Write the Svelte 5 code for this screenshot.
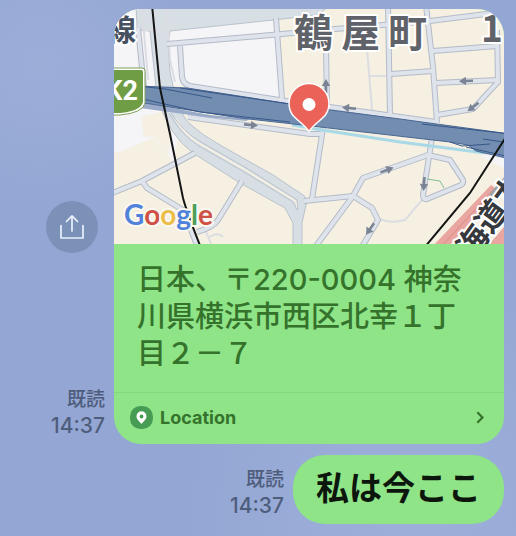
<script lang="ts">
	type Arrow = { x: number; y: number; angle: number };

	const address = '日本、〒220-0004 神奈川県横浜市西区北幸１丁目２－７';

	const roads = [
		'M167 44L293 33L335 29L430 21L510 11',
		'M276 18L282 99',
		'M180 46L182 77Q183 84 190 86L286 101L330 107L436 122',
		'M326 48L327 106',
		'M388 5L390 116',
		'M426 5L433 67L437 123',
		'M391 74L433 71',
		'M433 51L497 46',
		'M435 83L498 80',
		'M497 30L498 82L473 109L437 115',
		'M138 28L144 88',
		'M188 117L310 134L323 134',
		'M323 128L312 199',
		'M304 201L353 196L372 208L378 220L360 250',
		'M353 196L313 250',
		'M353 196L363 178L428 155L450 160L463 180Q464 183 461 185L427 199Q423 200 423 195L432 138',
		'M110 194L142 181L195 153',
		'M142 181L147 188L183 210L199 250',
		'M242 181L218 220Q214 227 197 232'
	];

	const lanes = [
		'M367 48L372 110M368 76L388 76',
		'M380 219Q391 224 405 220L422 200',
		'M205 229L211 244M208 238Q218 231 223 237',
		'M143 9L144 32L148 80M167 9L170 60L175 82M166 30L143 30'
	];

	const arrows: Arrow[] = [
		{ x: 251, y: 125, angle: 5 },
		{ x: 349, y: 108, angle: 186 },
		{ x: 326, y: 86, angle: -90 },
		{ x: 466, y: 81, angle: 178 },
		{ x: 473, y: 107, angle: 142 },
		{ x: 387, y: 170, angle: -20 },
		{ x: 424, y: 184, angle: 94 },
		{ x: 370, y: 229, angle: 125 }
	];
</script>

{#snippet receipt()}
	<div class="receipt">
		<span class="read">既読</span>
		<time datetime="14:37">14:37</time>
	</div>
{/snippet}

<main class="chat">
	<section class="message">
		<div class="side">
			<button class="share" type="button" aria-label="Share">
				<svg width="24" height="26" viewBox="0 0 24 26" aria-hidden="true">
					<path d="M1 11.5V24H23V11.5M12 17V2M6.5 7.5L12 1.8L17.5 7.5" />
				</svg>
			</button>
			{@render receipt()}
		</div>

		<article class="card">
			<svg class="map" viewBox="114 9 390 235" role="img" aria-label="Map">
				<rect x="114" y="9" width="390" height="235" fill="#f5f0e1" />
				<!-- blocks -->
				<path
					fill="#f5f4f7"
					d="M114 9H160V122H180L174 162L153 138L134 146L118 153L114 150Z"
				/>
				<path fill="#f5f0e1" d="M141 117L162 112L172 134L168 154L152 136L144 137Z" />
				<path fill="#f5f4f7" d="M166 30L275 20L281 99L166 84ZM480 156L504 150V168Z" />

				<!-- trunk road -->
				<path
					class="trunk"
					d="M136 5H330L318 15L273 20L170 31L168 44L170 72L175 95L182 113Q186 121 190 124Q202 135 220 145L273 175L303 195Q308 198 306 205L302 223V248H293V223L285 208L240 183L193 153Q180 143 173 132Q166 121 163 113L156 87L150 31L137 30Z"
				/>
				<path fill="none" stroke="#f5f0e1" stroke-width="2" d="M175 118Q185 135 200 144L247 171L294 200Q298 203 297 208" />
				<path
					fill="none"
					stroke="#b9c2cc"
					d="M171 113Q184 133 201 142L248 169L297 200L298 210M169 113Q181 135 199 146L246 173L293 202L297 210"
				/>

				{#each lanes as d}
					<path class="lane" {d} />
				{/each}
				{#each roads as d}
					<path class="casing" {d} />
				{/each}
				{#each roads as d}
					<path class="road" {d} />
				{/each}

				<path fill="none" stroke="#a9d9e6" stroke-width="3" d="M292 125L322 130L400 142L485 153" />
				<path fill="none" stroke="#7fbf93" d="M427 179L440 181L444 188" />

				<!-- motorway -->
				<path fill="#9aabc9" d="M140 102L210 115L250 119L246 121L205 117L140 108Z" />
				<path
					fill="#728db0"
					stroke="#4a6793"
					d="M138 86L187 88L290 104L330 110L400 119L510 134V159L476 151L468 145L450 142L320 127L240 118L138 102Z"
				/>
				<path
					fill="none"
					stroke="#38588a"
					d="M138 86L165 89L212 98M180 88L290 104M138 98L200 112L290 122M422 124L510 134M450 142L462 146L490 144M466 147L510 157M483 139L510 143"
				/>

				{#each arrows as a}
					<g transform="translate({a.x} {a.y}) rotate({a.angle})">
						<path fill="#7b8494" d="M-7 -1.3H0V-4.2L7 0L0 4.2V1.3H-7Z" />
					</g>
				{/each}

				<!-- railways -->
				<path class="rail" d="M152 5L156 47L160 88L170 134L183 198Q186 210 201 248" />
				<path class="rail" d="M506 137L470 193L424 248" />
				<path fill="#e9a5a0" d="M431 248L491 185L499 191L447 248ZM486 248L504 227V248Z" />
				<path fill="none" stroke="#dc8983" d="M440 248L495 188" />
				<path fill="none" stroke="#a5a3a2" stroke-width="4" d="M490 196L506 178" />

				<!-- place names -->
				<text class="label line" x="106" y="41" font-size="30">線</text>
				<text class="label" x="294 341 388" y="47" font-size="39">鶴屋町</text>
				<text class="label number" x="481" y="42" font-size="37">1</text>
				<text class="label line dark" transform="translate(473 260) rotate(-54)" font-size="31">海道本</text>

				<path fill="#fff" stroke="#7a9f55" d="M100 68H142Q145 68 145 71V103Q143 113 120 115H100Z" />
				<path fill="#6f9d45" d="M100 70H141Q143 70 143 72V102Q141 111 120 113H100Z" />
				<text class="shield" x="138" y="100" text-anchor="end">K2</text>

				<!-- pin -->
				<path
					fill="#ea6258"
					stroke="#fff"
					stroke-width="1.5"
					d="M309 131.500C305 125 298 121 293 115.500A20 20 0 1 1 325 115.500C320 121 313 125 309 131.500Z"
				/>
				<circle cx="309" cy="104.500" r="6.500" fill="#fff" />

				<text class="google" x="124" y="225">
					<tspan fill="#5082dc">G</tspan><tspan fill="#cf5146">o</tspan><tspan fill="#ecbd49">o</tspan
					><tspan fill="#5082dc">g</tspan><tspan fill="#4c9f58">l</tspan><tspan fill="#cf5146">e</tspan>
				</text>
			</svg>

			<p class="address">{address}</p>

			<a class="location" href="#location">
				<svg width="23" height="23" viewBox="0 0 23 23" aria-hidden="true">
					<rect width="23" height="23" rx="10.500" fill="#479c54" />
					<path
						fill="#fff"
						fill-rule="evenodd"
						d="M11.500 18C9.500 15.500 6.500 13.500 6.500 10.300A5 5 0 0 1 16.500 10.300C16.500 13.500 13.500 15.500 11.500 18ZM11.500 8.600A1.900 1.900 0 1 0 11.500 12.400A1.900 1.900 0 1 0 11.500 8.600Z"
					/>
				</svg>
				<span>Location</span>
				<svg class="chevron" width="8" height="13" viewBox="0 0 8 13" aria-hidden="true">
					<path d="M1.300 1.300L6.500 6.500L1.300 11.700" />
				</svg>
			</a>
		</article>
	</section>

	<section class="message">
		<div class="side text-side">
			{@render receipt()}
		</div>
		<p class="bubble">私は今ここ</p>
	</section>
</main>

<style>
	:global(body) {
		margin: 0;
	}

	.chat {
		box-sizing: border-box;
		display: flex;
		flex-direction: column;
		gap: 11px;
		min-height: 100vh;
		padding: 9px 12px 12px 0;
		background:
			radial-gradient(ellipse at 8% 12%, rgb(164 181 220 / 0.5), transparent 22%),
			radial-gradient(ellipse at 80% 100%, rgb(164 181 220 / 0.6), transparent 40%),
			#94a7d4;
		font-family: Inter, 'Noto Sans CJK JP', sans-serif;
	}

	.message {
		display: flex;
		justify-content: flex-end;
	}

	.side {
		display: grid;
		grid-template-rows: 1fr auto 1fr;
		flex: 0 0 114px;
		justify-items: end;
	}

	.text-side {
		display: flex;
		flex: none;
		align-items: flex-end;
	}

	.share {
		display: grid;
		grid-row: 2;
		place-items: center;
		width: 52px;
		height: 52px;
		margin-right: 16px;
		padding: 0;
		border: 0;
		border-radius: 50%;
		background: #7c91b8;
	}

	.share path {
		fill: none;
		stroke: #e9f0fb;
		stroke-width: 1.7;
		stroke-linejoin: round;
		stroke-linecap: round;
	}

	.receipt {
		display: flex;
		grid-row: 3;
		flex-direction: column;
		align-self: end;
		align-items: flex-end;
		margin: 0 9px 5px 0;
		color: #4f5d7c;
		font-size: 21px;
		font-weight: 500;
		line-height: 26px;
	}

	.read {
		font-size: 19px;
	}

	.card {
		flex: 1;
		min-width: 0;
		overflow: hidden;
		border-radius: 27px;
		background: #8ee487;
	}

	.map {
		display: block;
		width: 100%;
		height: auto;
	}

	.trunk {
		fill: #d7dee4;
		stroke: #b9c2cc;
	}

	.lane {
		fill: none;
		stroke: #dcdde2;
		stroke-width: 2;
	}

	.casing,
	.road {
		fill: none;
		stroke: #b4bbc8;
		stroke-width: 6;
		stroke-linejoin: round;
	}

	.road {
		stroke: #dfe4ec;
		stroke-width: 4;
	}

	.rail {
		fill: none;
		stroke: #151515;
		stroke-width: 2;
	}

	.label {
		fill: #5f6369;
		stroke: #fff;
		stroke-width: 4;
		stroke-linejoin: round;
		paint-order: stroke;
		font-family: 'Noto Sans CJK JP', sans-serif;
		font-weight: 700;
	}

	.line {
		fill: #46505f;
	}

	.dark {
		fill: #35383c;
	}

	.shield {
		fill: #fff;
		font-family: Roboto, sans-serif;
		font-size: 27px;
		font-weight: 700;
	}

	.google {
		stroke: #faf8f0;
		stroke-width: 4;
		stroke-linejoin: round;
		paint-order: stroke;
		font-family: Lato, sans-serif;
		font-size: 28px;
		font-weight: 700;
	}

	.address {
		margin: 0;
		padding: 17px 21px 20px 23px;
		color: #35722b;
		font-size: 29px;
		font-weight: 500;
		line-height: 37px;
	}

	.location {
		box-sizing: border-box;
		display: flex;
		align-items: center;
		gap: 7px;
		height: 52px;
		padding: 0 20px 2px 16px;
		border-top: 1px solid #85d87e;
		color: #35722b;
		font-size: 18px;
		font-weight: 700;
		text-decoration: none;
	}

	.chevron {
		margin-left: auto;
	}

	.chevron path {
		fill: none;
		stroke: #35722b;
		stroke-width: 2.2;
	}

	.bubble {
		margin: 0;
		padding: 9px 23px 12px;
		border-radius: 32px;
		background: #8ee487;
		color: #0d160c;
		font-size: 33px;
		font-weight: 700;
		line-height: 48px;
	}
</style>
